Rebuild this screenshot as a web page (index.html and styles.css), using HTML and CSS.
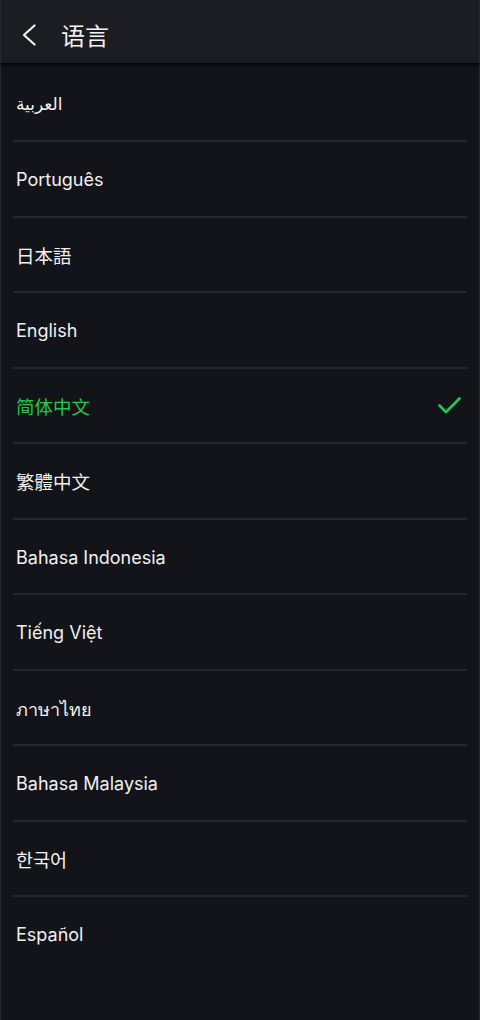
FILE: index.html
```html
<!DOCTYPE html>
<html lang="zh-CN">
<head>
<meta charset="utf-8">
<title>语言</title>
<link rel="stylesheet" href="styles.css">
</head>
<body>
<div class="screen">
  <header class="topbar">
    <span class="back">
      <svg width="16" height="22" viewBox="0 0 16 22"><path d="M13.5 1.5 L3 11 L13.5 20.5" fill="none" stroke="#f2f2f2" stroke-width="2.2" stroke-linecap="round" stroke-linejoin="round"/></svg>
    </span>
    <h1 class="title">语言</h1>
  </header>
  <ul class="list">
    <li class="row"><span class="label ar" lang="ar">العربية</span></li>
    <li class="row"><span class="label">Português</span></li>
    <li class="row"><span class="label ja" lang="ja">日本語</span></li>
    <li class="row"><span class="label">English</span></li>
    <li class="row selected"><span class="label zh" lang="zh-CN">简体中文</span>
      <svg class="check" width="25" height="19" viewBox="0 0 25 19"><path d="M2.5 9.5 L9 16 L22.5 2.5" fill="none" stroke="#22c84b" stroke-width="2.8" stroke-linecap="round" stroke-linejoin="round"/></svg>
    </li>
    <li class="row"><span class="label tw" lang="zh-TW">繁體中文</span></li>
    <li class="row"><span class="label">Bahasa Indonesia</span></li>
    <li class="row"><span class="label">Tiếng Việt</span></li>
    <li class="row"><span class="label th" lang="th">ภาษาไทย</span></li>
    <li class="row"><span class="label">Bahasa Malaysia</span></li>
    <li class="row"><span class="label ko" lang="ko">한국어</span></li>
    <li class="row last"><span class="label">Español</span></li>
  </ul>
</div>
</body>
</html>
```
FILE: styles.css
```css
html, body {
  margin: 0;
  padding: 0;
  background: #131419;
}
body {
  font-family: Inter, "Noto Sans", "Noto Sans CJK SC", sans-serif;
  color: #f2f2f2;
}
.screen {
  width: 480px;
  height: 1020px;
  background: #131419;
  box-sizing: border-box;
  border-left: 1px solid #24252a;
  border-right: 1px solid #24252a;
  overflow: hidden;
}
.topbar {
  height: 63px;
  box-sizing: border-box;
  padding-top: 6px;
  background: #1c1d22;
  display: flex;
  align-items: center;
  box-shadow: 0 2px 3px rgba(0, 0, 0, 0.85);
  position: relative;
  z-index: 1;
  margin: 0 -1px;
}
.back {
  display: flex;
  width: 16px;
  margin-left: 21px;
}
.title {
  margin: 0 0 0 24px;
  font-family: "Noto Sans CJK SC", sans-serif;
  font-size: 24px;
  font-weight: 400;
  line-height: 1;
  color: #f4f4f4;
}
.list {
  list-style: none;
  margin: 0;
  padding: 3.5px 0 0;
}
.row {
  height: 73.5px;
  margin: 0 12px;
  padding: 0 5px 0 3px;
  border-bottom: 2px solid #26272c;
  display: flex;
  align-items: center;
  justify-content: space-between;
}
.row.last {
  border-bottom: none;
}
.label {
  font-size: 18px;
  line-height: 24px;
  padding-top: 3px;
  color: #f0f0f0;
}
.ar { font-family: "DejaVu Sans", "Noto Sans", sans-serif; font-size: 17px; padding-top: 1px; }
.ja { font-family: "Noto Sans CJK JP", sans-serif; font-size: 18.5px; padding-top: 1px; }
.zh { font-family: "Noto Sans CJK SC", sans-serif; font-size: 18.5px; padding-top: 1px; }
.tw { font-family: "Noto Sans CJK TC", sans-serif; font-size: 18.5px; padding-top: 1px; }
.ko { font-family: "Noto Sans CJK KR", sans-serif; font-size: 18.5px; padding-top: 1px; }
.th { font-family: "Noto Sans", "DejaVu Sans", sans-serif; }
.selected .label {
  color: #22c84b;
}
.check {
  display: block;
}
```
